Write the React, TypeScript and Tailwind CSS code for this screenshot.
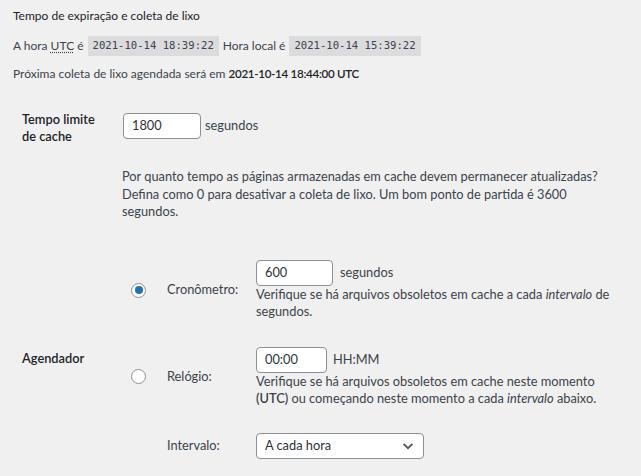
import React from 'react'

function Code({ children }: { children: React.ReactNode }) {
    return (
        <code className="inline-flex h-[20px] items-center bg-[#dcdcde] px-[5px] font-['DejaVu_Sans_Mono',monospace] text-[10.6px] text-[#3c434a]">
            {children}
        </code>
    )
}

function Radio({ checked }: { checked?: boolean }) {
    return (
        <span className="flex h-[15px] w-[15px] items-center justify-center rounded-full border border-[#8c8f94] bg-white">
            {checked && <span className="h-[8px] w-[8px] rounded-full bg-[#2271b1]" />}
        </span>
    )
}

function Field({ value, width }: { value: string; width: string }) {
    return (
        <div className={`flex h-[26px] ${width} items-center rounded-[4px] border border-[#8c8f94] bg-white px-[8px] text-[#2c3338]`}>
            {value}
        </div>
    )
}

export default function App() {
    return (
        <main className="min-h-screen w-full bg-[#f0f0f1] font-['Lato',sans-serif] text-[#3c434a]">
            <div className="px-[13px] pt-[6.5px] text-[12px]">
                <p className="leading-[17px] text-[#1d2327]">Tempo de expiração e coleta de lixo</p>
                <div className="mt-[12.5px] flex items-center gap-[4px]">
                    <span>
                        A hora <abbr className="underline decoration-dotted underline-offset-2">UTC</abbr> é
                    </span>
                    <Code>2021-10-14 18:39:22</Code>
                    <span>Hora local é</span>
                    <Code>2021-10-14 15:39:22</Code>
                </div>
                <p className="mt-[8.5px] leading-[17px]">
                    Próxima coleta de lixo agendada será em{' '}
                    <strong className="text-[11.6px] font-semibold tracking-[-0.3px] text-[#1d2327]">2021-10-14 18:44:00 UTC</strong>
                </p>
            </div>

            <div className="mt-[29px] pl-[22px] text-[12.8px]">
                <div className="flex items-start">
                    <div className="w-[101px] font-semibold leading-[17px] text-[#1d2327]">
                        Tempo limite
                        <br />
                        de cache
                    </div>
                    <div className="mt-[1.5px] flex h-[27px] items-center gap-[4px]">
                        <Field value="1800" width="w-[78px]" />
                        <span>segundos</span>
                    </div>
                </div>
                <p className="mt-[23.5px] ml-[100px] w-[485px] leading-[17.5px]">
                    Por quanto tempo as páginas armazenadas em cache devem permanecer atualizadas? Defina como 0 para desativar a coleta de
                    lixo. Um bom ponto de partida é 3600 segundos.
                </p>

                <div className="mt-[39.5px] flex">
                    <div className="w-[101px] pt-[89.5px] font-semibold leading-[17px] text-[#1d2327]">Agendador</div>
                    <div className="grid grid-cols-[36px_89px_1fr] gap-y-[26.5px] pl-[8px]">
                        <div className="flex items-center">
                            <Radio checked />
                        </div>
                        <div className="flex items-center">Cronômetro:</div>
                        <div>
                            <div className="flex items-center gap-[7px]">
                                <Field value="600" width="w-[77px]" />
                                <span>segundos</span>
                            </div>
                            <p className="w-[365px] leading-[17px]">
                                Verifique se há arquivos obsoletos em cache a cada <em>intervalo</em> de segundos.
                            </p>
                        </div>

                        <div className="flex items-center">
                            <Radio />
                        </div>
                        <div className="flex items-center">Relógio:</div>
                        <div>
                            <div className="flex items-center gap-[6px]">
                                <Field value="00:00" width="w-[71px]" />
                                <span>HH:MM</span>
                            </div>
                            <p className="w-[365px] leading-[17px]">
                                Verifique se há arquivos obsoletos em cache neste momento <strong className="font-semibold">(UTC)</strong> ou
                                começando neste momento a cada <em>intervalo</em> abaixo.
                            </p>
                        </div>

                        <div />
                        <div className="flex items-center">Intervalo:</div>
                        <div className="flex h-[26px] w-[168px] items-center justify-between rounded-[4px] border border-[#8c8f94] bg-white pl-[8px] pr-[9px] text-[#2c3338]">
                            <span>A cada hora</span>
                            <svg width="12" height="8" viewBox="0 0 12 8" fill="none">
                                <path d="M1.5 1.8 6 6.2l4.5-4.4" stroke="#50575e" strokeWidth="1.8" />
                            </svg>
                        </div>
                    </div>
                </div>
            </div>
        </main>
    )
}
